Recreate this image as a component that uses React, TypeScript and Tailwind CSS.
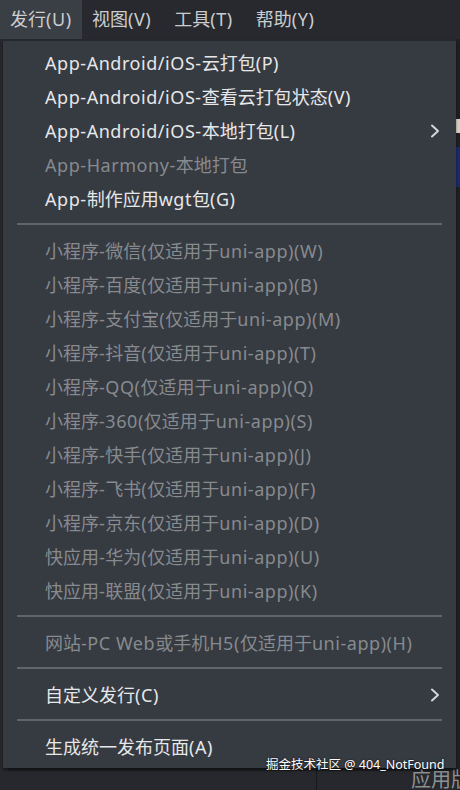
import React from 'react';

type Item = { label: string; disabled?: boolean; sub?: boolean } | 'sep';

const items: Item[] = [
  { label: 'App-Android/iOS-云打包(P)' },
  { label: 'App-Android/iOS-查看云打包状态(V)' },
  { label: 'App-Android/iOS-本地打包(L)', sub: true },
  { label: 'App-Harmony-本地打包', disabled: true },
  { label: 'App-制作应用wgt包(G)' },
  'sep',
  { label: '小程序-微信(仅适用于uni-app)(W)', disabled: true },
  { label: '小程序-百度(仅适用于uni-app)(B)', disabled: true },
  { label: '小程序-支付宝(仅适用于uni-app)(M)', disabled: true },
  { label: '小程序-抖音(仅适用于uni-app)(T)', disabled: true },
  { label: '小程序-QQ(仅适用于uni-app)(Q)', disabled: true },
  { label: '小程序-360(仅适用于uni-app)(S)', disabled: true },
  { label: '小程序-快手(仅适用于uni-app)(J)', disabled: true },
  { label: '小程序-飞书(仅适用于uni-app)(F)', disabled: true },
  { label: '小程序-京东(仅适用于uni-app)(D)', disabled: true },
  { label: '快应用-华为(仅适用于uni-app)(U)', disabled: true },
  { label: '快应用-联盟(仅适用于uni-app)(K)', disabled: true },
  'sep',
  { label: '网站-PC Web或手机H5(仅适用于uni-app)(H)', disabled: true },
  'sep',
  { label: '自定义发行(C)', sub: true },
  'sep',
  { label: '生成统一发布页面(A)' },
];

const menus = ['发行(U)', '视图(V)', '工具(T)', '帮助(Y)'];

// 拉丁字符在参考图里字距更宽一点
const Label = ({ text }: { text: string }) => (
  <>
    {text.split(/([\x20-\x7e]+)/).map((part, i) =>
      /^[\x20-\x7e]+$/.test(part) ? (
        <span key={i} className="tracking-[0.55px]">{part}</span>
      ) : (
        part
      )
    )}
  </>
);

const Chevron = () => (
  <svg width="10" height="14" viewBox="0 0 10 14" fill="none" stroke="#d4d6d9" strokeWidth="2" strokeLinecap="round" strokeLinejoin="round">
    <polyline points="2 1.5 8 7 2 12.5" />
  </svg>
);

export default function App() {
  return (
    <div
      className="relative w-[460px] h-[790px] overflow-hidden bg-[#26282d]"
      style={{ fontFamily: '"Noto Sans", "Noto Sans CJK SC", sans-serif' }}
    >
      {/* 菜单栏 */}
      <div className="flex h-[39px] items-center bg-[#27292e] text-[18px] text-[#cbcdd0]">
        {menus.map((m, i) => (
          <div
            key={m}
            className={`flex h-full items-center whitespace-nowrap ${i === 0 ? 'w-[82px] pl-[10px] bg-[#3a3e45]' : 'pl-[10px] pr-[13px]'}`}
          >
            <Label text={m} />
          </div>
        ))}
      </div>

      {/* 背景编辑区 */}
      <div className="flex h-[751px]">
        <div className="flex-1" />
        <div className="w-[4px] flex flex-col bg-[#1e2024]">
          <div className="mt-[80px] h-[14px] bg-[#d8d2c4]" />
          <div className="mt-[14px] h-[40px] bg-[#1c2a6a]" />
        </div>
      </div>
      <div className="absolute left-[8px] top-[768px] h-[3px] w-[452px] bg-[#1d1f23]" />
      <div className="absolute left-[316px] top-[768px] h-[22px] w-px bg-[#17181b]" />
      <div className="absolute left-[411px] top-[770px] whitespace-nowrap text-[20px] leading-none text-[#8e9194]">应用版</div>

      {/* 下拉菜单 */}
      <div className="absolute left-[3px] top-[41px] w-[453px] bg-[#363a41] pt-[5px] pb-[4px] shadow-[0_2px_3px_rgba(0,0,0,0.45)]">
        {items.map((it, i) =>
          it === 'sep' ? (
            <div key={i} className="mx-[14px] mt-[7px] mb-[9px] h-[2px] bg-[#62666c]" />
          ) : (
            <div
              key={i}
              className={`flex h-[34px] items-center justify-between pl-[42px] pr-[16px] text-[18px] whitespace-nowrap ${it.disabled ? 'text-[#878a8e]' : 'text-[#e6e7e9]'}`}
            >
              <span><Label text={it.label} /></span>
              {it.sub && <Chevron />}
            </div>
          )
        )}
      </div>

      {/* 水印 */}
      <div className="absolute left-[266px] top-[757px] whitespace-nowrap text-[12.5px] leading-[16px] text-white [text-shadow:0_0_2px_rgba(0,0,0,0.9)]">
        掘金技术社区 @ 404_NotFound
      </div>
    </div>
  );
}
